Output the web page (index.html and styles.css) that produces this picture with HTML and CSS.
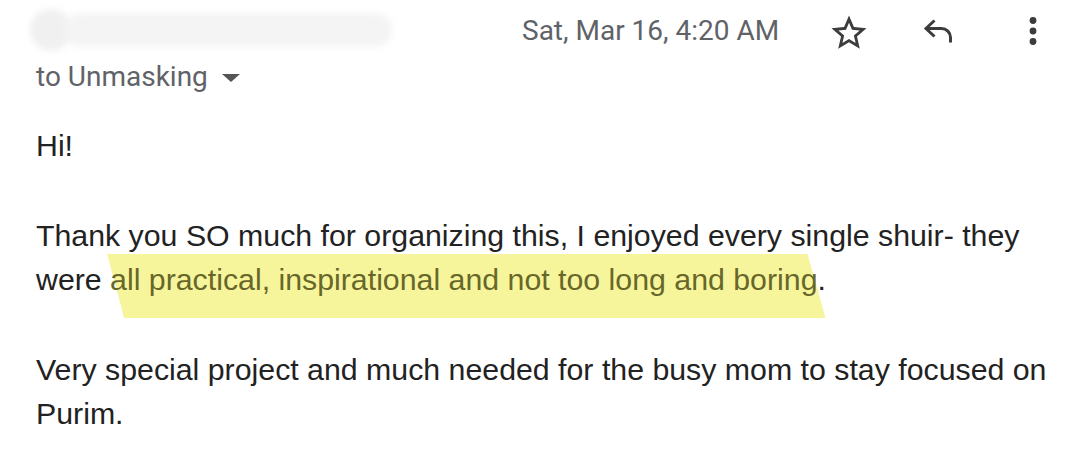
FILE: index.html
```html
<!DOCTYPE html>
<html>
<head>
<meta charset="utf-8">
<link rel="stylesheet" href="styles.css">
</head>
<body>
<div class="mail">
  <div class="header">
    <div class="sender"><span class="avatar"></span><span class="name"></span></div>
    <div class="date">Sat, Mar 16, 4:20 AM</div>
    <div class="icon star">
      <svg width="42" height="42" viewBox="0 0 24 24"><path d="M22 9.24l-7.19-.62L12 2 9.19 8.63 2 9.24l5.46 4.73L5.82 21 12 17.27 18.18 21l-1.63-7.03L22 9.24zM12 15.4l-3.76 2.27 1-4.28-3.32-2.88 4.38-.38L12 6.1l1.71 4.04 4.38.38-3.32 2.88 1 4.28L12 15.4z" fill="#3c3c3c"/></svg>
    </div>
    <div class="icon reply">
      <svg width="36" height="36" viewBox="0 0 36 36"><path d="M13.5 7.5L5 15.5l8.5 8M5.5 15.5h15a9 9 0 0 1 9 9v5" fill="none" stroke="#3c3c3c" stroke-width="3" stroke-linejoin="miter" stroke-linecap="butt"/></svg>
    </div>
    <div class="icon more">
      <svg width="36" height="36" viewBox="0 0 36 36"><circle cx="18" cy="7.5" r="3.4" fill="#3c3c3c"/><circle cx="18" cy="18" r="3.4" fill="#3c3c3c"/><circle cx="18" cy="28.5" r="3.4" fill="#3c3c3c"/></svg>
    </div>
  </div>
  <div class="to">to Unmasking <span class="caret"></span></div>
  <div class="body">
    <p class="para">Hi!</p>
    <p class="para">Thank you SO much for organizing this, I enjoyed every single shuir- they were <span class="hl">all practical, inspirational and not too long and boring</span>.</p>
    <p class="para">Very special project and much needed for the busy mom to stay focused on Purim.</p>
  </div>
</div>
</body>
</html>
```

FILE: styles.css
```css
html, body {
  margin: 0;
  padding: 0;
  background: #fff;
}
.mail {
  padding: 0 0 0 36px;
  width: 1080px;
  box-sizing: border-box;
}
.header {
  display: flex;
  align-items: center;
  height: 64px;
}
.sender {
  display: flex;
  align-items: center;
  width: 362px;
  height: 44px;
  margin-left: -6px;
  margin-top: -4px;
  filter: blur(3px);
  flex: none;
}
.avatar {
  width: 42px;
  height: 42px;
  border-radius: 50%;
  background: #f0f0f0;
  flex: none;
}
.name {
  flex: 1;
  height: 34px;
  margin-left: -8px;
  border-radius: 17px;
  background: #f4f4f4;
}
.date {
  margin-left: 130px;
  font-family: Roboto, "Liberation Sans", sans-serif;
  font-size: 28px;
  color: #5f6368;
  margin-top: -4px;
  white-space: nowrap;
}
.icon {
  display: flex;
  align-items: center;
  justify-content: center;
  flex: none;
}
.star {
  width: 42px;
  height: 42px;
  margin-left: 49px;
  margin-top: 2px;
}
.reply {
  width: 36px;
  height: 36px;
  margin-left: 51px;
  margin-top: -2px;
}
.more {
  width: 36px;
  height: 36px;
  margin-left: 58px;
  margin-top: -2px;
}
.to {
  font-family: Roboto, "Liberation Sans", sans-serif;
  font-size: 28px;
  color: #5f6368;
  line-height: 30px;
  display: flex;
  align-items: center;
  margin-top: -2px;
}
.caret {
  display: inline-block;
  width: 0;
  height: 0;
  border-left: 9px solid transparent;
  border-right: 9px solid transparent;
  border-top: 8px solid #555;
  margin-left: 14px;
  margin-top: 2px;
}
.body {
  font-family: Arial, "Liberation Sans", sans-serif;
  font-size: 30.3px;
  color: #222;
  line-height: 44px;
  padding-top: 32px;
}
.body p {
  margin: 0 0 46px 0;
}
.body p:last-child {
  margin-bottom: 0;
}
.hl {
  position: relative;
  z-index: 0;
  color: #67672a;
}
.hl::before {
  content: "";
  position: absolute;
  left: -3px;
  right: -8px;
  top: -9px;
  bottom: -22px;
  background: #f7f59c;
  z-index: -1;
  clip-path: polygon(0 0, calc(100% - 18px) 0, 100% 100%, 17px 100%);
}
```
